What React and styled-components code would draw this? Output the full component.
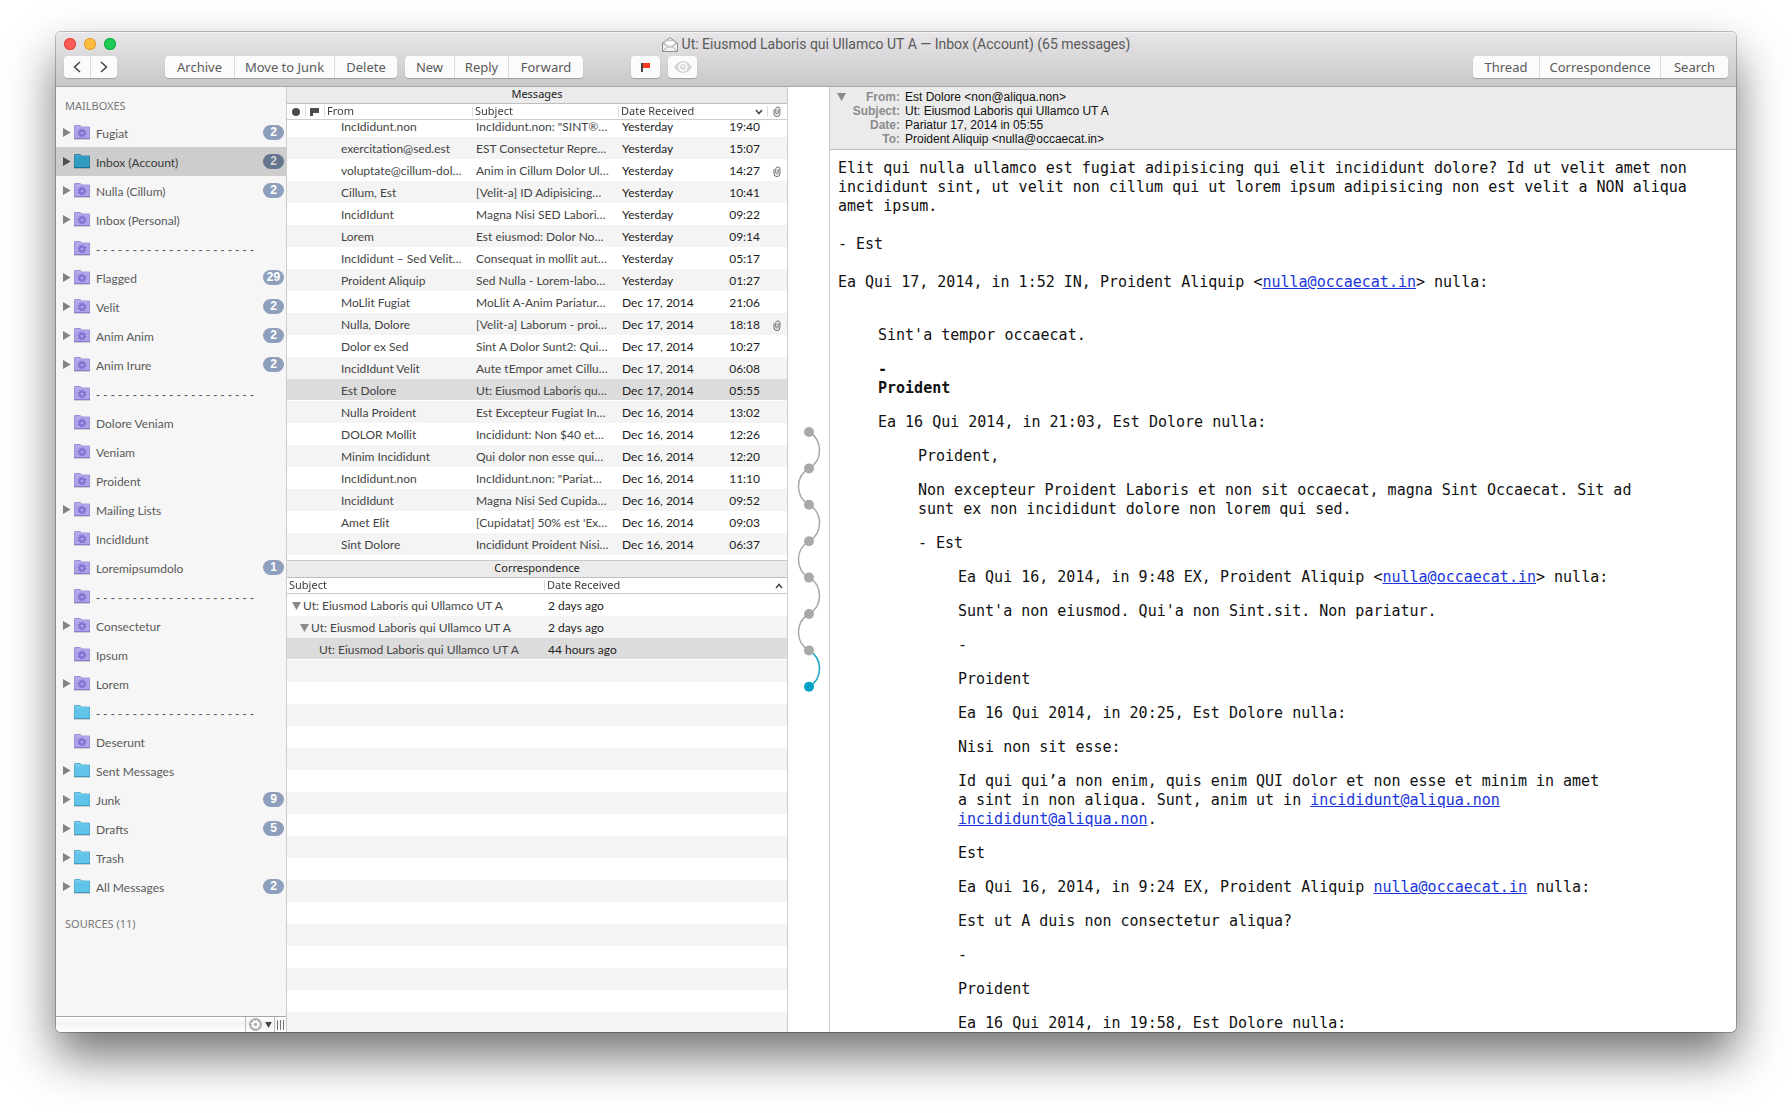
import React, { useLayoutEffect, useRef } from "react";
import styled, { createGlobalStyle, css } from "styled-components";

const HUMANIST = `Lato, "Liberation Sans", sans-serif`;
const CHROME = `"Noto Sans", "Liberation Sans", sans-serif`;
const PLAIN = `"Liberation Sans", Arial, sans-serif`;
const MONO = `"DejaVu Sans Mono", "Liberation Mono", monospace`;

const GlobalStyle = createGlobalStyle`
  *, *::before, *::after { box-sizing: border-box; }
  body { margin: 0; background: #fff; }
  button { font: inherit; color: inherit; border: 0; padding: 0; background: none; }
`;

const Desktop = styled.div`
  height: 100vh;
  padding: 32px 56px 81px;
  overflow: hidden;
  font-family: ${HUMANIST};
`;

const Window = styled.main`
  display: flex;
  flex-direction: column;
  height: 100%;
  border-radius: 5px;
  background: #fff;
  box-shadow: 0 0 0 1px rgba(0, 0, 0, 0.24), 0 24px 48px rgba(0, 0, 0, 0.56);
`;

/* ---------- title bar and toolbar ---------- */

const TitleBar = styled.header`
  flex: none;
  height: 55px;
  padding: 0 8px;
  border-bottom: 1px solid #aaa8aa;
  border-radius: 5px 5px 0 0;
  background: linear-gradient(#e8e6e8, #c9c8c9);
  box-shadow: inset 0 1px #f4f4f4;
  color: #555;
`;

const TitleRow = styled.div`
  display: grid;
  grid-template-columns: 56px 1fr 56px;
  align-items: center;
  height: 24px;
`;

const Lights = styled.div`
  display: flex;
  gap: 8px;
`;

const Light = styled.button`
  width: 12px;
  height: 12px;
  border-radius: 50%;
  background: ${(p) => p.$fill};
  box-shadow: inset 0 0 0 1px ${(p) => p.$edge};
`;

const Title = styled.h1`
  display: flex;
  justify-content: center;
  align-items: center;
  gap: 4px;
  margin: 0;
  font: 400 14px/20px Roboto, sans-serif;
  color: #5a5a5a;
`;

const Toolbar = styled.div`
  display: flex;
  gap: 8px;
`;

const Group = styled.div`
  display: flex;
  gap: 1px;
  height: 22px;
  margin-left: ${(p) => (p.$spaced ? "40px" : "0")};
  border-radius: 4px;
  overflow: hidden;
  background: #dcdcdc;
  box-shadow: 0 1px 1px rgba(0, 0, 0, 0.22);
`;

const RightGroup = styled(Group)`
  margin-left: auto;
`;

const ToolButton = styled.button`
  display: flex;
  justify-content: center;
  align-items: center;
  width: ${(p) => p.$width}px;
  background: #fbfbfb;
  font: 13px/22px ${CHROME};
  color: #5a5a5a;
`;

/* ---------- layout of the panes ---------- */

const Panes = styled.div`
  display: grid;
  grid-template-columns: 231px 501px 42px minmax(0, 1fr);
  flex: 1;
  min-height: 0;
  overflow: hidden;
  border-radius: 0 0 5px 5px;
`;

/* ---------- sidebar ---------- */

const Sidebar = styled.nav`
  display: flex;
  flex-direction: column;
  min-height: 0;
  border-right: 1px solid #ccc;
  background: #f6f6f6;
`;

const SidebarScroll = styled.div`
  flex: 1;
  min-height: 0;
  overflow: hidden;
`;

const SidebarHeading = styled.h2`
  margin: 0;
  padding: ${(p) => (p.$first ? "9px" : "13px")} 0 2px 9px;
  font: 400 11px/20px ${CHROME};
  color: #777;
`;

const MailboxList = styled.ul`
  margin: 0;
  padding: 0;
  list-style: none;
`;

const MailboxButton = styled.button`
  display: grid;
  grid-template-columns: 7px 16px 1fr auto;
  align-items: center;
  width: 100%;
  height: 29px;
  padding: 0 2px 0 7px;
  background: ${(p) => (p.$selected ? "#cdcdcd" : "transparent")};
  color: ${(p) => (p.$selected ? "#3a3a3a" : "#5a5a5a")};
  font: 12px/16px ${HUMANIST};
  text-align: left;
  column-gap: 4px;
`;

const MailboxName = styled.span`
  padding: 2px 0 0 2px;
  white-space: nowrap;
  ${(p) => p.$rule && css`font-family: ${PLAIN};`}
`;

const Badge = styled.span`
  min-width: 21px;
  height: 15px;
  border-radius: 8px;
  background: ${(p) => (p.$selected ? "#65758f" : "#8e9fbd")};
  color: ${(p) => (p.$selected ? "#d4d4d4" : "#fff")};
  font: 700 12px/15px ${PLAIN};
  text-align: center;
`;

const SidebarFooter = styled.footer`
  display: flex;
  justify-content: flex-end;
  flex: none;
  height: 16px;
  border-top: 1px solid #a6a6a6;
  background: linear-gradient(#fff, #f0f0f0 50%, #f6f6f6 50%, #fff);
`;

const FooterButton = styled.button`
  display: flex;
  justify-content: center;
  align-items: center;
  gap: 3px;
  width: ${(p) => p.$width}px;
  border-left: 1px solid #bbb;
`;

/* ---------- message lists ---------- */

const Lists = styled.div`
  display: flex;
  flex-direction: column;
  min-height: 0;
  border-right: 1px solid #ccc;
`;

const ListSection = styled.section`
  display: flex;
  flex-direction: column;
  flex: ${(p) => (p.$grow ? "1" : "0 0 473px")};
  min-height: 0;
  border-top: ${(p) => (p.$grow ? "1px solid #c8c8c8" : "0")};
`;

const ListTitle = styled.h2`
  flex: none;
  height: 17px;
  margin: 0;
  border-bottom: 1px solid #bfbfbf;
  background: #ebebeb;
  color: #222;
  font: 400 11px/14px ${CHROME};
  text-align: center;
`;

const ListScroll = styled.div`
  flex: 1;
  min-height: 0;
  overflow: auto;
  scrollbar-width: none;
  ${(p) =>
    p.$striped &&
    css`
      background: linear-gradient(#fff 50%, #f4f4f4 50%) 0 16px / 100% 44px;
    `}
`;

const ListBody = styled.div`
  padding-bottom: ${(p) => (p.$striped ? "0" : "5px")};
`;

const Table = styled.table`
  width: 100%;
  table-layout: fixed;
  border-collapse: separate;
  border-spacing: 0;
  font: 12px/20px ${HUMANIST};
`;

const Column = styled.col`
  width: ${(p) => (p.$width ? `${p.$width}px` : "auto")};
`;

const Th = styled.th`
  position: sticky;
  top: 0;
  height: 16px;
  padding: 0 2px;
  border-bottom: 1px solid #ccc;
  background: #fff;
  color: #3c3c3c;
  font: 400 11px/14px ${CHROME};
  text-align: left;
  vertical-align: top;
  white-space: nowrap;
`;

const ThInner = styled.span`
  display: flex;
  align-items: center;
  justify-content: ${(p) => (p.$center ? "center" : "space-between")};
  height: 11px;
  margin: ${(p) => (p.$divided ? "2px -3px 0 -2px" : "2px 0 0")};
  padding: ${(p) => (p.$divided ? "0 5px 0 2px" : "0")};
  border-left: ${(p) => (p.$divided ? "1px solid #ddd" : "0")};
`;

const ThText = styled.span`
  padding-bottom: 1px;
`;

const Row = styled.tr`
  background: ${(p) => (p.$selected ? "#dcdcdc" : p.$odd ? "#f4f4f4" : "#fff")};
  > td {
    box-shadow: ${(p) => (p.$selected ? "inset 0 -1px #fff" : "none")};
  }
`;

const Td = styled.td`
  height: 22px;
  padding: 2px ${(p) => (p.$right ? 7 : 0)}px 0 ${(p) => p.$indent || 0}px;
  color: ${(p) => (p.$strong ? "#1c1c1c" : "#444")};
  text-align: ${(p) => (p.$right ? "right" : "left")};
  white-space: nowrap;
  overflow: hidden;
`;

const ClipSlot = styled.span`
  display: flex;
`;

const TreeLabel = styled.span`
  display: flex;
  align-items: center;
  gap: 2px;
  padding-left: ${(p) => 5 + p.$level * 8}px;
`;

const TwistSlot = styled.span`
  display: flex;
  width: 9px;
`;

/* ---------- conversation rail ---------- */

const Rail = styled.aside`
  display: flex;
  justify-content: center;
  align-items: center;
  border-right: 1px solid #ccc;
`;

/* ---------- reader ---------- */

const Reader = styled.article`
  min-width: 0;
  min-height: 0;
  display: flex;
  flex-direction: column;
`;

const ReaderHead = styled.header`
  display: grid;
  grid-template-columns: 9px 1fr;
  align-items: start;
  flex: none;
  height: 63px;
  padding: 3px 7px;
  border-bottom: 1px solid #bbb;
  background: #ebebeb;
`;

const CollapseButton = styled.button`
  display: flex;
  align-items: center;
  height: 14px;
`;

const Fields = styled.dl`
  display: grid;
  grid-template-columns: 54px 1fr;
  column-gap: 5px;
  margin: 0;
  font: 12px/14px ${PLAIN};
  color: #111;
`;

const FieldName = styled.dt`
  font-weight: 700;
  color: #8c8c8c;
  text-align: right;
`;

const FieldValue = styled.dd`
  margin: 0;
`;

const Letter = styled.div`
  flex: 1;
  min-height: 0;
  overflow: hidden;
  padding: 9px 8px 0;
  font: 15px/19px ${MONO};
  color: #111;

  p { margin: 0 0 15px; }
`;

const Intro = styled.div`
  margin-bottom: 34px;
  && p { margin: 0 0 19px; }
`;

const Quote = styled.blockquote`
  margin: 0 0 0 40px;
`;

const Mail = styled.a`
  color: #1a35dc;
  text-decoration: underline;
`;

/* ---------- drawings ---------- */

const Folder = ({ kind, selected }) => {
  const c =
    kind === "smart"
      ? { top: "#b7a9ec", body: "#aea3e8", edge: "#8c7ccf" }
      : selected
      ? { top: "#3ba3c6", body: "#319bc2", edge: "#1b7396" }
      : { top: "#74cdee", body: "#5fc3ea", edge: "#3d9cc4" };
  return (
    <svg width="16" height="15" viewBox="0 0 16 15" aria-hidden="true">
      <path d="M0 14.5h16" stroke="#000" strokeOpacity=".16" />
      <path d="M.5 13.5V1Q.5.5 1 .5H6Q6.5.5 6.8 1L7.4 2H15.5V13.5Z" fill={c.body} stroke={c.edge} strokeOpacity=".75" />
      <path d="M1 1H6.2L7 2.5H15V3.5H1Z" fill={c.top} />
      <path d="M0 13.5H16" stroke={c.edge} />
      {kind === "smart" && (
        <>
          <circle cx="8" cy="8" r="3.6" fill="none" stroke="#7e6bd0" strokeWidth="1.6" strokeDasharray="1.5 1.3" />
          <circle cx="8" cy="8" r="2.3" fill="none" stroke="#7e6bd0" strokeWidth="1.4" />
        </>
      )}
    </svg>
  );
};

const RightTriangle = ({ dark }) => (
  <svg width="8" height="9" viewBox="0 0 8 9" aria-hidden="true">
    <path d="M0 0L7.6 4.5L0 9Z" fill={dark ? "#505050" : "#828282"} />
  </svg>
);

const DownTriangle = ({ size = 9, color = "#8a8a8a" }) => (
  <svg width={size} height={size - 1} viewBox="0 0 9 8" aria-hidden="true">
    <path d="M0 0H9L4.5 8Z" fill={color} />
  </svg>
);

const Chevron = ({ d, w = 8, h = 6 }) => (
  <svg width={w} height={h} viewBox={`0 0 ${w} ${h}`} fill="none" stroke="#444" strokeWidth="1.5" aria-hidden="true">
    <path d={d} />
  </svg>
);

const Clip = () => (
  <svg width="8" height="11" viewBox="0 0 8 11" fill="none" stroke="#666" strokeWidth="1" aria-label="Attachment">
    <path d="M1 3.2V7.6A2.9 2.9 0 0 0 6.9 7.6V2.6A2.1 2.1 0 0 0 2.8 2.6V7.2A1.2 1.2 0 0 0 5.1 7.2V3.2" />
  </svg>
);

const Envelope = () => (
  <svg width="16" height="15" viewBox="0 0 16 15" fill="none" stroke="#8f8f8f" aria-hidden="true">
    <path d="M.5 6L8 .8L15.5 6V14.5H.5Z" fill="#f2f2f2" />
    <path d="M3 7.5V3.8H13V7.5" fill="#fff" stroke="#b5b5b5" />
    <path d="M.8 6.3L8 10.5L15.2 6.3M1 14L6 9.4M15 14L10 9.4" stroke="#a5a5a5" />
  </svg>
);

const RedFlag = () => (
  <svg width="9" height="9" viewBox="0 0 9 9" aria-hidden="true">
    <path d="M0 0H2V9H0Z" fill="#444" />
    <path d="M2 0H9V5H2Z" fill="#ff3b24" />
  </svg>
);

const DarkFlag = () => (
  <svg width="9" height="8" viewBox="0 0 9 8" aria-label="Flag">
    <path d="M0 0H9V5H3V8H0Z" fill="#4c4c4c" />
  </svg>
);

const Dot = () => (
  <svg width="8" height="8" viewBox="0 0 8 8" aria-label="Unread">
    <circle cx="4" cy="4" r="4" fill="#4c4c4c" />
  </svg>
);

const Eye = () => (
  <svg width="18" height="12" viewBox="0 0 18 12" aria-hidden="true">
    <path d="M0 6Q4 0 9 0T18 6Q14 12 9 12T0 6Z" fill="#d6d6d6" />
    <circle cx="9" cy="6" r="3.7" fill="none" stroke="#fff" strokeWidth="1.5" />
    <circle cx="9" cy="5.4" r="1.2" fill="#fff" />
  </svg>
);

const Gear = () => (
  <svg width="13" height="13" viewBox="0 0 13 13" aria-hidden="true">
    <circle cx="6.5" cy="6.5" r="6.5" fill="#adadad" />
    <circle cx="6.5" cy="6.5" r="3.9" fill="none" stroke="#fff" strokeWidth="1.4" strokeDasharray="1.7 1.36" />
    <circle cx="6.5" cy="6.5" r="2.6" fill="none" stroke="#fff" strokeWidth="1.7" />
  </svg>
);

const Grip = () => (
  <svg width="8" height="10" viewBox="0 0 8 10" stroke="#777" aria-hidden="true">
    <path d="M.5 0V10M3.5 0V10M6.5 0V10" />
  </svg>
);

const THREAD_LENGTH = 8;
const THREAD_STEP = 36.4;

const ThreadArcs = () => {
  const nodes = Array.from({ length: THREAD_LENGTH }, (_, i) => 6 + i * THREAD_STEP);
  const last = THREAD_LENGTH - 1;
  return (
    <svg width="28" height="267" viewBox="0 0 28 267" fill="none" role="img" aria-label="Conversation thread">
      {nodes.slice(0, -1).map((y, i) => (
        <path
          key={y}
          d={`M14 ${y}A21 21 0 0 ${i % 2 ? 0 : 1} 14 ${y + THREAD_STEP}`}
          stroke={i === last - 1 ? "#17a5c8" : "#a9a9a9"}
          strokeWidth="1.5"
        />
      ))}
      {nodes.map((y, i) => (
        <circle key={y} cx="14" cy={y} r="5" fill={i === last ? "#00a3c7" : "#a9a9a9"} />
      ))}
    </svg>
  );
};

/* ---------- data ---------- */

const RULE = "- - - - - - - - - - - - - - - - - - - - - -";

// name, folder kind, has children, unread count
const MAILBOXES = [
  ["Fugiat", "smart", true, 2],
  ["Inbox (Account)", "plain", true, 2],
  ["Nulla (Cillum)", "smart", true, 2],
  ["Inbox (Personal)", "smart", true],
  [RULE, "smart"],
  ["Flagged", "smart", true, 29],
  ["Velit", "smart", true, 2],
  ["Anim Anim", "smart", true, 2],
  ["Anim Irure", "smart", true, 2],
  [RULE, "smart"],
  ["Dolore Veniam", "smart"],
  ["Veniam", "smart"],
  ["Proident", "smart"],
  ["Mailing Lists", "smart", true],
  ["IncidIdunt", "smart"],
  ["Loremipsumdolo", "smart", false, 1],
  [RULE, "smart"],
  ["Consectetur", "smart", true],
  ["Ipsum", "smart"],
  ["Lorem", "smart", true],
  [RULE, "plain"],
  ["Deserunt", "smart"],
  ["Sent Messages", "plain", true],
  ["Junk", "plain", true, 9],
  ["Drafts", "plain", true, 5],
  ["Trash", "plain", true],
  ["All Messages", "plain", true, 2],
];
const SELECTED_MAILBOX = 1;

const MESSAGES = [
  ["IncIdidunt.non", 'IncIdidunt.non: "SINT®…', "Yesterday", "19:40"],
  ["exercitation@sed.est", "EST Consectetur Repre…", "Yesterday", "15:07"],
  ["voluptate@cillum-dol…", "Anim in Cillum Dolor Ul…", "Yesterday", "14:27", true],
  ["Cillum, Est", "[Velit-a] ID Adipisicing…", "Yesterday", "10:41"],
  ["IncidIdunt", "Magna Nisi SED Labori…", "Yesterday", "09:22"],
  ["Lorem", "Est eiusmod: Dolor No…", "Yesterday", "09:14"],
  ["IncIdidunt – Sed Velit…", "Consequat in mollit aut…", "Yesterday", "05:17"],
  ["Proident Aliquip", "Sed Nulla - Lorem-labo…", "Yesterday", "01:27"],
  ["MoLlit Fugiat", "MoLlit A-Anim Pariatur…", "Dec 17, 2014", "21:06"],
  ["Nulla, Dolore", "[Velit-a] Laborum - proi…", "Dec 17, 2014", "18:18", true],
  ["Dolor ex Sed", "Sint A Dolor Sunt2: Qui…", "Dec 17, 2014", "10:27"],
  ["IncidIdunt Velit", "Aute tEmpor amet Cillu…", "Dec 17, 2014", "06:08"],
  ["Est Dolore", "Ut: Eiusmod Laboris qu…", "Dec 17, 2014", "05:55"],
  ["Nulla Proident", "Est Excepteur Fugiat In…", "Dec 16, 2014", "13:02"],
  ["DOLOR Mollit", "Incididunt: Non $40 et…", "Dec 16, 2014", "12:26"],
  ["Minim Incididunt", "Qui dolor non esse qui…", "Dec 16, 2014", "12:20"],
  ["IncIdidunt.non", 'IncIdidunt.non: "Pariat…', "Dec 16, 2014", "11:10"],
  ["IncidIdunt", "Magna Nisi Sed Cupida…", "Dec 16, 2014", "09:52"],
  ["Amet Elit", "[Cupidatat] 50% est 'Ex…", "Dec 16, 2014", "09:03"],
  ["Sint Dolore", "Incididunt Proident Nisi…", "Dec 16, 2014", "06:37"],
];
const SELECTED_MESSAGE = 12;

const SUBJECT = "Ut: Eiusmod Laboris qui Ullamco UT A";
const CORRESPONDENCE = ["2 days ago", "2 days ago", "44 hours ago"];

const FIELDS = [
  ["From:", "Est Dolore <non@aliqua.non>"],
  ["Subject:", SUBJECT],
  ["Date:", "Pariatur 17, 2014 in 05:55"],
  ["To:", "Proident Aliquip <nulla@occaecat.in>"],
];

/* ---------- parts ---------- */

const Address = ({ to }) => <Mail href={`mailto:${to}`}>{to}</Mail>;

function Header() {
  return (
    <TitleBar>
      <TitleRow>
        <Lights>
          <Light aria-label="Close" $fill="#fc5b57" $edge="#e2443f" />
          <Light aria-label="Minimize" $fill="#fdbb40" $edge="#e0a033" />
          <Light aria-label="Zoom" $fill="#1fca55" $edge="#14ab41" />
        </Lights>
        <Title>
          <Envelope />
          {SUBJECT} — Inbox (Account) (65 messages)
        </Title>
      </TitleRow>
      <Toolbar>
        <Group>
          <ToolButton $width={26} aria-label="Back"><Chevron w={8} h={12} d="M7 1L1.5 6L7 11" /></ToolButton>
          <ToolButton $width={26} aria-label="Next"><Chevron w={8} h={12} d="M1 1L6.5 6L1 11" /></ToolButton>
        </Group>
        <Group $spaced>
          <ToolButton $width={69}>Archive</ToolButton>
          <ToolButton $width={99}>Move to Junk</ToolButton>
          <ToolButton $width={62}>Delete</ToolButton>
        </Group>
        <Group>
          <ToolButton $width={49}>New</ToolButton>
          <ToolButton $width={53}>Reply</ToolButton>
          <ToolButton $width={74}>Forward</ToolButton>
        </Group>
        <Group $spaced>
          <ToolButton $width={29} aria-label="Flag message"><RedFlag /></ToolButton>
        </Group>
        <Group>
          <ToolButton $width={29} aria-label="Preview"><Eye /></ToolButton>
        </Group>
        <RightGroup>
          <ToolButton $width={66}>Thread</ToolButton>
          <ToolButton $width={120}>Correspondence</ToolButton>
          <ToolButton $width={67}>Search</ToolButton>
        </RightGroup>
      </Toolbar>
    </TitleBar>
  );
}

function Mailboxes() {
  return (
    <Sidebar>
      <SidebarScroll>
        <SidebarHeading $first>MAILBOXES</SidebarHeading>
        <MailboxList>
          {MAILBOXES.map(([name, kind, nested, count], i) => {
            const selected = i === SELECTED_MAILBOX;
            return (
              <li key={i}>
                <MailboxButton $selected={selected}>
                  <span>{nested && <RightTriangle dark={selected} />}</span>
                  <Folder kind={kind} selected={selected} />
                  <MailboxName $rule={name === RULE}>{name}</MailboxName>
                  {count && <Badge $selected={selected}>{count}</Badge>}
                </MailboxButton>
              </li>
            );
          })}
        </MailboxList>
        <SidebarHeading>SOURCES (11)</SidebarHeading>
      </SidebarScroll>
      <SidebarFooter>
        <FooterButton $width={29} aria-label="Actions">
          <Gear />
          <DownTriangle size={7} color="#444" />
        </FooterButton>
        <FooterButton $width={12} aria-label="Resize sidebar"><Grip /></FooterButton>
      </SidebarFooter>
    </Sidebar>
  );
}

function Messages() {
  const scroller = useRef(null);
  useLayoutEffect(() => {
    scroller.current.scrollTop = scroller.current.scrollHeight;
  }, []);
  return (
    <ListSection>
      <ListTitle>Messages</ListTitle>
      <ListScroll ref={scroller}>
        <ListBody>
          <Table>
            <colgroup>
              {[18, 19, 148, 146, 90, 59, 20].map((w, i) => <Column key={i} $width={w} />)}
            </colgroup>
            <thead>
              <tr>
                <Th><ThInner $center><Dot /></ThInner></Th>
                <Th><ThInner $center $divided><DarkFlag /></ThInner></Th>
                <Th><ThInner $divided><ThText>From</ThText></ThInner></Th>
                <Th><ThInner $divided><ThText>Subject</ThText></ThInner></Th>
                <Th colSpan={2}>
                  <ThInner $divided><ThText>Date Received</ThText><Chevron d="M1 1L4 4.5L7 1" /></ThInner>
                </Th>
                <Th><ThInner $divided $center><Clip /></ThInner></Th>
              </tr>
            </thead>
            <tbody>
              {MESSAGES.map(([from, subject, date, time, clip], i) => (
                <Row key={i} $odd={i % 2 === 1} $selected={i === SELECTED_MESSAGE}>
                  <Td />
                  <Td />
                  <Td $indent={17}>{from}</Td>
                  <Td $indent={4}>{subject}</Td>
                  <Td $indent={4} $strong>{date}</Td>
                  <Td $right $strong>{time}</Td>
                  <Td $indent={6}>{clip && <ClipSlot><Clip /></ClipSlot>}</Td>
                </Row>
              ))}
            </tbody>
          </Table>
        </ListBody>
      </ListScroll>
    </ListSection>
  );
}

function Correspondence() {
  return (
    <ListSection $grow>
      <ListTitle>Correspondence</ListTitle>
      <ListScroll $striped>
        <ListBody $striped>
          <Table>
            <colgroup>
              <Column $width={257} />
              <Column />
            </colgroup>
            <thead>
              <tr>
                <Th><ThInner><ThText>Subject</ThText></ThInner></Th>
                <Th>
                  <ThInner $divided><ThText>Date Received</ThText><Chevron d="M1 5L4 1.5L7 5" /></ThInner>
                </Th>
              </tr>
            </thead>
            <tbody>
              {CORRESPONDENCE.map((age, i) => {
                const leaf = i === CORRESPONDENCE.length - 1;
                return (
                  <Row key={i} $odd={i % 2 === 1} $selected={leaf}>
                    <Td>
                      <TreeLabel $level={i}>
                        <TwistSlot>{!leaf && <DownTriangle />}</TwistSlot>
                        {SUBJECT}
                      </TreeLabel>
                    </Td>
                    <Td $indent={4} $strong>{age}</Td>
                  </Row>
                );
              })}
            </tbody>
          </Table>
        </ListBody>
      </ListScroll>
    </ListSection>
  );
}

function Message() {
  return (
    <Reader>
      <ReaderHead>
        <CollapseButton aria-label="Collapse headers"><DownTriangle /></CollapseButton>
        <Fields>
          {FIELDS.map(([name, value]) => (
            <React.Fragment key={name}>
              <FieldName>{name}</FieldName>
              <FieldValue>{value}</FieldValue>
            </React.Fragment>
          ))}
        </Fields>
      </ReaderHead>
      <Letter>
        <Intro>
          <p>
            Elit qui nulla ullamco est fugiat adipisicing qui elit incididunt dolore? Id ut velit amet non
            incididunt sint, ut velit non cillum qui ut lorem ipsum adipisicing non est velit a NON aliqua
            amet ipsum.
          </p>
          <p>- Est</p>
          <p>Ea Qui 17, 2014, in 1:52 IN, Proident Aliquip &lt;<Address to="nulla@occaecat.in" />&gt; nulla:</p>
        </Intro>
        <Quote>
          <p>Sint'a tempor occaecat.</p>
          <p><b>-<br />Proident</b></p>
          <p>Ea 16 Qui 2014, in 21:03, Est Dolore nulla:</p>
          <Quote>
            <p>Proident,</p>
            <p>
              Non excepteur Proident Laboris et non sit occaecat, magna Sint Occaecat. Sit ad<br />
              sunt ex non incididunt dolore non lorem qui sed.
            </p>
            <p>- Est</p>
            <Quote>
              <p>Ea Qui 16, 2014, in 9:48 EX, Proident Aliquip &lt;<Address to="nulla@occaecat.in" />&gt; nulla:</p>
              <p>Sunt'a non eiusmod. Qui'a non Sint.sit. Non pariatur.</p>
              <p>-</p>
              <p>Proident</p>
              <p>Ea 16 Qui 2014, in 20:25, Est Dolore nulla:</p>
              <p>Nisi non sit esse:</p>
              <p>
                Id qui qui’a non enim, quis enim QUI dolor et non esse et minim in amet<br />
                a sint in non aliqua. Sunt, anim ut in <Address to="incididunt@aliqua.non" /><br />
                <Address to="incididunt@aliqua.non" />.
              </p>
              <p>Est</p>
              <p>Ea Qui 16, 2014, in 9:24 EX, Proident Aliquip <Address to="nulla@occaecat.in" /> nulla:</p>
              <p>Est ut A duis non consectetur aliqua?</p>
              <p>-</p>
              <p>Proident</p>
              <p>Ea 16 Qui 2014, in 19:58, Est Dolore nulla:</p>
            </Quote>
          </Quote>
        </Quote>
      </Letter>
    </Reader>
  );
}

export default function App() {
  return (
    <Desktop>
      <GlobalStyle />
      <Window>
        <Header />
        <Panes>
          <Mailboxes />
          <Lists>
            <Messages />
            <Correspondence />
          </Lists>
          <Rail><ThreadArcs /></Rail>
          <Message />
        </Panes>
      </Window>
    </Desktop>
  );
}
